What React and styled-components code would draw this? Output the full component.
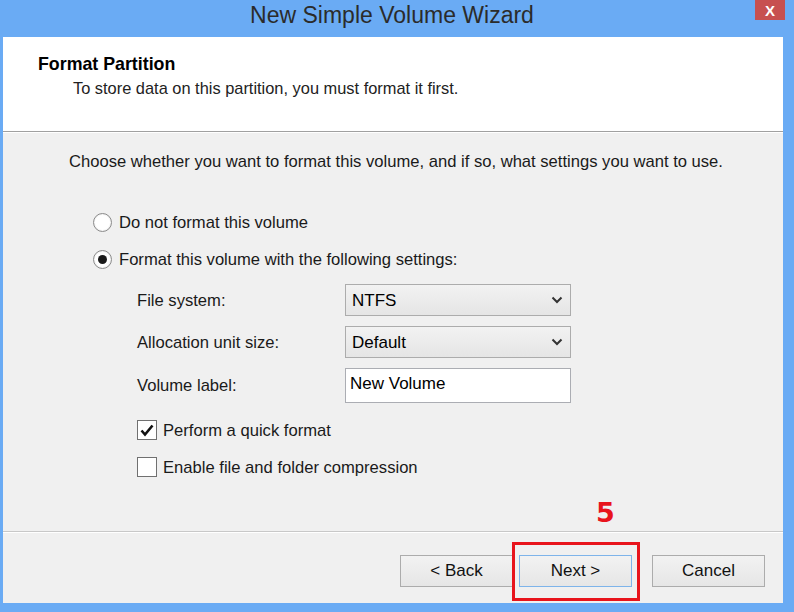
import React from "react";
import styled, { createGlobalStyle } from "styled-components";

const Global = createGlobalStyle`
  html, body { margin: 0; padding: 0; }
  body { font-family: "Liberation Sans", Arial, sans-serif; }
`;

const Win = styled.div`
  width: 794px;
  height: 612px;
  box-sizing: border-box;
  background: #6aabf4;
  padding: 0 11px 9px 3px;
  display: flex;
  flex-direction: column;
  position: relative;
  overflow: hidden;
`;

const TitleBar = styled.div`
  height: 37px;
  display: flex;
  align-items: center;
  justify-content: center;
  font-size: 23px;
  color: #2b2b2b;
  padding-right: 2px;
  padding-bottom: 6px;
  box-sizing: border-box;
`;

const Close = styled.div`
  position: absolute;
  top: 0;
  right: 9px;
  width: 30px;
  height: 20px;
  background: #c75050;
  color: #fff;
  font-size: 15px;
  font-weight: bold;
  display: flex;
  align-items: center;
  justify-content: center;
`;

const Client = styled.div`
  flex: 1;
  background: #f0f0f0;
  display: flex;
  flex-direction: column;
`;

const Header = styled.div`
  height: 95px;
  box-sizing: border-box;
  background: #fff;
  padding: 17px 0 0 35px;
  border-bottom: 1px solid #a0a0a0;
  box-shadow: 0 1px 0 #fff;
`;

const HTitle = styled.div`
  font-weight: bold;
  font-size: 17.8px;
  line-height: 20px;
  color: #000;
`;

const HSub = styled.div`
  font-size: 16.4px;
  line-height: 19px;
  color: #222;
  margin: 5px 0 0 35px;
`;

const Body = styled.div`
  flex: 1;
  padding: 20px 0 0 66px;
  font-size: 16.6px;
  line-height: 19px;
  color: #1a1a1a;
`;

const Intro = styled.div`
  margin-bottom: 41px;
`;

const Radio = styled.div`
  display: flex;
  align-items: center;
  gap: 7px;
  margin-left: 24px;
  height: 20px;
  margin-bottom: ${(p) => p.$mb || 0}px;
`;

const RadioDot = styled.span`
  width: 19px;
  height: 19px;
  box-sizing: border-box;
  border-radius: 50%;
  border: 1px solid #8a8a8a;
  background: #fff;
  display: flex;
  align-items: center;
  justify-content: center;
  box-shadow: inset 0 0 0 1px #f4f4f4;
  &::after {
    content: "";
    display: ${(p) => (p.$on ? "block" : "none")};
    width: 9px;
    height: 9px;
    border-radius: 50%;
    background: #1a1a1a;
  }
`;

const Settings = styled.div`
  margin-left: 68px;
  display: grid;
  grid-template-columns: 208px 226px;
  row-gap: 10px;
  align-items: center;
  width: 434px;
`;

const Label = styled.div``;

const Select = styled.div`
  height: 32px;
  box-sizing: border-box;
  border: 1px solid #acacac;
  background: linear-gradient(#f2f2f2, #e5e5e5);
  display: flex;
  align-items: center;
  justify-content: space-between;
  padding: 0 7px 0 6px;
  font-size: 17px;
  color: #000;
`;

const TextBox = styled.div`
  height: 35px;
  box-sizing: border-box;
  border: 1px solid #abadb3;
  background: #fff;
  padding: 5px 4px 0;
  font-size: 17px;
  color: #000;
`;

const Checks = styled.div`
  margin: 17px 0 0 68px;
  display: flex;
  flex-direction: column;
  gap: 17px;
`;

const CheckRow = styled.div`
  display: flex;
  align-items: center;
  gap: 6px;
  height: 20px;
`;

const Box = styled.span`
  width: 20px;
  height: 20px;
  box-sizing: border-box;
  border: 1px solid #707070;
  background: #fff;
  display: flex;
  align-items: center;
  justify-content: center;
`;

const Footer = styled.div`
  height: 72px;
  box-sizing: border-box;
  border-top: 1px solid #c8c8c8;
  box-shadow: inset 0 1px 0 #fff;
  display: flex;
  align-items: flex-start;
  padding: 23px 0 0 397px;
  position: relative;
`;

const Btn = styled.div`
  width: ${(p) => p.$w || 113}px;
  height: 32px;
  box-sizing: border-box;
  border: 1px solid ${(p) => (p.$focus ? "#7eb4ea" : "#acacac")};
  background: linear-gradient(#f2f2f2, #e6e6e6);
  display: flex;
  align-items: center;
  justify-content: center;
  font-size: 17px;
  color: #111;
  margin-left: ${(p) => p.$ml || 0}px;
`;

const Highlight = styled.div`
  position: absolute;
  left: 509px;
  top: 10px;
  width: 128px;
  height: 59px;
  box-sizing: border-box;
  border: 3px solid #e8141c;
`;

const Step = styled.div`
  position: absolute;
  left: 596px;
  top: 497px;
  font-family: "DejaVu Sans", sans-serif;
  font-weight: bold;
  font-size: 27px;
  color: #e8141c;
`;

const Chevron = () => (
  <svg width="12" height="8" viewBox="0 0 12 8">
    <path d="M1.5 1.5 L6 6 L10.5 1.5" fill="none" stroke="#333" strokeWidth="2" />
  </svg>
);

const Tick = () => (
  <svg width="14" height="13" viewBox="0 0 14 13">
    <path d="M1.5 6.5 L5 10.5 L12.5 1.5" fill="none" stroke="#111" strokeWidth="2.6" />
  </svg>
);

export default function App() {
  return (
    <>
      <Global />
      <Win>
        <TitleBar>New Simple Volume Wizard</TitleBar>
        <Close>X</Close>
        <Client>
          <Header>
            <HTitle>Format Partition</HTitle>
            <HSub>To store data on this partition, you must format it first.</HSub>
          </Header>
          <Body>
            <Intro>
              Choose whether you want to format this volume, and if so, what settings you want to use.
            </Intro>
            <Radio $mb={17}>
              <RadioDot />
              Do not format this volume
            </Radio>
            <Radio $mb={15}>
              <RadioDot $on />
              Format this volume with the following settings:
            </Radio>
            <Settings>
              <Label>File system:</Label>
              <Select>
                NTFS
                <Chevron />
              </Select>
              <Label>Allocation unit size:</Label>
              <Select>
                Default
                <Chevron />
              </Select>
              <Label>Volume label:</Label>
              <TextBox>New Volume</TextBox>
            </Settings>
            <Checks>
              <CheckRow>
                <Box>
                  <Tick />
                </Box>
                Perform a quick format
              </CheckRow>
              <CheckRow>
                <Box />
                Enable file and folder compression
              </CheckRow>
            </Checks>
          </Body>
          <Footer>
            <Btn>&lt; Back</Btn>
            <Btn $ml={6} $focus>
              Next &gt;
            </Btn>
            <Btn $ml={20}>Cancel</Btn>
            <Highlight />
          </Footer>
        </Client>
        <Step>5</Step>
      </Win>
    </>
  );
}
